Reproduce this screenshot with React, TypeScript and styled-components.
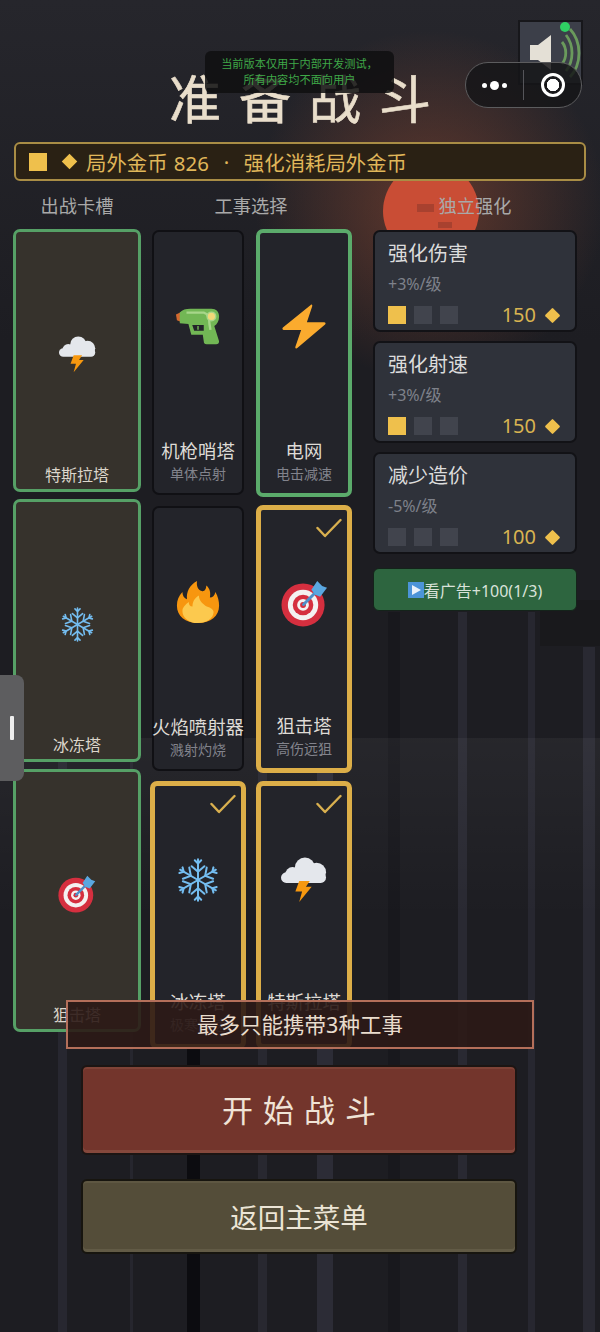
import styled, { createGlobalStyle } from 'styled-components'

const GlobalStyle = createGlobalStyle`
  html, body {
    margin: 0;
    padding: 0;
    background: #1d1d22;
  }
  * {
    box-sizing: border-box;
  }
`

// vertical bars of the blurred game scene behind the menu: x, width, colour, top
const bars: [number, number, string, number][] = [
  [58, 9, '#272730', 612],
  [130, 3, '#26262e', 612],
  [187, 13, '#0c0c10', 1040],
  [258, 9, '#282830', 612],
  [317, 16, '#2c2c36', 612],
  [388, 12, '#18181d', 612],
  [390, 10, '#0c0c10', 998],
  [458, 9, '#292932', 612],
  [528, 7, '#272730', 612],
  [583, 12, '#292932', 647],
]
const barLayers = bars.map(([, , c]) => `linear-gradient(${c}, ${c})`).join(', ')
const barPositions = bars.map(([x, , , y]) => `${x}px ${y}px`).join(', ')
const barSizes = bars.map(([, w, , y]) => `${w}px ${1332 - y}px`).join(', ')

/* ---------- icons ---------- */

const Target = ({ size }: { size: number }) => (
  <svg width={size} height={size} viewBox="0 0 48 48">
    <circle cx="22.500" cy="25.500" r="22" fill="#d52f3f" />
    <circle cx="22.500" cy="25.500" r="15.500" fill="#f4f1f1" />
    <circle cx="22.500" cy="25.500" r="10.500" fill="#d52f3f" />
    <circle cx="22.500" cy="25.500" r="6" fill="#f4f1f1" />
    <circle cx="22.500" cy="25.500" r="3" fill="#d52f3f" />
    <path d="M23 25 L37 11" stroke="#4f8fc9" strokeWidth="3" strokeLinecap="round" />
    <path d="M31 10 L37 1 L42 6 L47 8 L40 17 L35 15 Z" fill="#5aa7e0" />
  </svg>
)

const Snowflake = ({ size }: { size: number }) => (
  <svg width={size} height={size} viewBox="0 0 48 48" fill="none" stroke="#74bdf0" strokeWidth="2.200" strokeLinecap="round" strokeLinejoin="round">
    {[0, 60, 120, 180, 240, 300].map((a) => (
      <g key={a} transform={`rotate(${a} 24 24)`}>
        <path d="M24 24 V1.500" />
        <path d="M17 9 L24 15 L31 9" />
        <path d="M20.500 2.500 L24 6 L27.500 2.500" />
      </g>
    ))}
  </svg>
)

const StormCloud = ({ size }: { size: number }) => (
  <svg width={size} height={size} viewBox="0 0 48 48">
    <g fill="#e4e7ec">
      <circle cx="12" cy="18" r="7.500" />
      <circle cx="25" cy="11" r="10.500" />
      <circle cx="37" cy="16" r="10" />
      <rect x="0" y="16" width="47" height="11" rx="5.500" />
    </g>
    <path d="M19 25 L30 25 L26 31 L32 31 L19 47 L22 36 L15 36 Z" fill="#f7980f" />
  </svg>
)

const Bolt = ({ size }: { size: number }) => (
  <svg width={size} height={size} viewBox="0 0 48 48">
    <path
      d="M31 1 C32 0 33 1 32.500 2.500 L27 19 L45 19 C46.500 19 47 20.500 46 21.500 L17 46 C16 47 14.500 46 15 44.500 L21 27 L3 27 C1.500 27 1 25.500 2 24.500 Z"
      fill="#fbab2e"
    />
  </svg>
)

const Flame = ({ size }: { size: number }) => (
  <svg width={size} height={size} viewBox="0 0 48 48">
    <path
      d="M24 47 C10 47 1 39 1 28 C1 22 3 17 7 13 C7 17 9 20 12 21 C11 13 15 5 23 1 C22 6 24 11 28 12 C31 13 33 10 33 6 C37 9 38 14 37 19 C40 19 42 17 43 13 C46 18 47 23 47 28 C47 39 38 47 24 47 Z"
      fill="#f7960f"
    />
    <path
      d="M24 47 C14 47 7 41 7 34 C7 30 10 27 14 24 C14 27 15 29 18 29 C18 24 20 20 25 17 C25 22 28 25 32 28 C36 30 41 31 41 35 C41 42 33 47 24 47 Z"
      fill="#fcc94e"
    />
  </svg>
)

const WaterGun = ({ size }: { size: number }) => (
  <svg width={size} height={size} viewBox="0 0 48 48">
    <path d="M1 12 L7 9 L7 20 L2 18 Z" fill="#d4682f" />
    <path
      d="M5 10 C8 7 11 6 16 6 L38 6 C43 6 46 9 46 14 C46 19 44 22 41 24 L46 40 C46 42 45 43 43 43 L33 43 C31 43 30 42 30 40 L29 33 L17 33 L14 22 L5 21 Z"
      fill="#72b755"
    />
    <path d="M18 23 L30 23 L30 29 L20 29 Z" fill="#23242a" />
    <path d="M24 24 L24 28" stroke="#72b755" strokeWidth="1.500" />
    <path d="M12 10 L30 10 C34 11 36 15 36 22 L37 28" stroke="#a7d68a" strokeWidth="2.500" fill="none" />
    <circle cx="38" cy="14" r="4.500" fill="#f2d878" stroke="#a7d68a" strokeWidth="1.500" />
  </svg>
)

const Check = () => (
  <svg width="26" height="20" viewBox="0 0 26 20" fill="none" stroke="#d9b04f" strokeWidth="2.400" strokeLinecap="round" strokeLinejoin="round">
    <path d="M1.500 10 L9 18 L24.500 2" />
  </svg>
)

/* ---------- data ---------- */

const slots = [
  { name: '特斯拉塔', icon: <StormCloud size={37} /> },
  { name: '冰冻塔', icon: <Snowflake size={35} /> },
  { name: '狙击塔', icon: <Target size={38} /> },
]

type Mark = 'none' | 'equipped' | 'picked'

const towers: { name: string; desc: string; mark: Mark; icon: React.ReactNode }[] = [
  { name: '机枪哨塔', desc: '单体点射', mark: 'none', icon: <WaterGun size={46} /> },
  { name: '电网', desc: '电击减速', mark: 'equipped', icon: <Bolt size={46} /> },
  { name: '火焰喷射器', desc: '溅射灼烧', mark: 'none', icon: <Flame size={44} /> },
  { name: '狙击塔', desc: '高伤远狙', mark: 'picked', icon: <Target size={47} /> },
  { name: '冰冻塔', desc: '极寒减速', mark: 'picked', icon: <Snowflake size={44} /> },
  { name: '特斯拉塔', desc: '连锁闪电', mark: 'picked', icon: <StormCloud size={46} /> },
]

const upgrades = [
  { name: '强化伤害', rate: '+3%/级', level: 1, cost: 150 },
  { name: '强化射速', rate: '+3%/级', level: 1, cost: 150 },
  { name: '减少造价', rate: '-5%/级', level: 0, cost: 100 },
]

/* ---------- page ---------- */

export default function App() {
  return (
    <Page>
      <GlobalStyle />
      <Scene>
        <Sun />
        <Ember $x={417} $y={204} $w={17} $h={8} />
        <Ember $x={438} $y={222} $w={14} $h={6} />
      </Scene>

      <Content>
        <Title>准备战斗</Title>
        <CoinBar>
          <CoinSquare />
          <CoinDiamond />
          <span>局外金币 826</span>
          <CoinDot>·</CoinDot>
          <span>强化消耗局外金币</span>
        </CoinBar>

        <Columns>
          <Column>
            <Heading>出战卡槽</Heading>
            <SlotList>
              {slots.map((s) => (
                <SlotCard key={s.name}>
                  <SlotIcon>{s.icon}</SlotIcon>
                  <SlotName>{s.name}</SlotName>
                </SlotCard>
              ))}
            </SlotList>
          </Column>

          <Column>
            <Heading>工事选择</Heading>
            <TowerGrid>
              {towers.map((t) => (
                <TowerCard key={t.name} $mark={t.mark}>
                  {t.mark === 'picked' && (
                    <CheckMark>
                      <Check />
                    </CheckMark>
                  )}
                  <TowerIcon>{t.icon}</TowerIcon>
                  <TowerName>{t.name}</TowerName>
                  <TowerDesc>{t.desc}</TowerDesc>
                </TowerCard>
              ))}
            </TowerGrid>
          </Column>

          <UpgradeColumn>
            <Heading>独立强化</Heading>
            <UpgradeList>
              {upgrades.map((u) => (
                <UpgradeCard key={u.name}>
                  <UpgradeName>{u.name}</UpgradeName>
                  <UpgradeRate>{u.rate}</UpgradeRate>
                  <UpgradeFoot>
                    <Pips>
                      {[0, 1, 2].map((i) => (
                        <Pip key={i} $on={i < u.level} />
                      ))}
                    </Pips>
                    <Cost>
                      {u.cost}
                      <CostDiamond />
                    </Cost>
                  </UpgradeFoot>
                </UpgradeCard>
              ))}
              <AdButton>
                <PlayBadge />
                看广告+100(1/3)
              </AdButton>
            </UpgradeList>
          </UpgradeColumn>
        </Columns>

        <Actions>
          <StartButton>开始战斗</StartButton>
          <BackButton>返回主菜单</BackButton>
        </Actions>
      </Content>

      <Notice>
        当前版本仅用于内部开发测试，
        <br />
        所有内容均不面向用户
      </Notice>

      <SoundButton>
        <svg width="61" height="61" viewBox="0 0 61 61" fill="none">
          <path d="M10 23 L18 23 L31 13 L31 48 L18 38 L10 38 Z" fill="#e4e0d6" />
          <path d="M42 20 C47 26 47 36 42 42" stroke="#6a9a5c" strokeWidth="2.800" />
          <path d="M46 13 C54 23 54 39 46 49" stroke="#6a9a5c" strokeWidth="2.800" />
          <path d="M50 7 C62 20 62 42 50 55" stroke="#6a9a5c" strokeWidth="2.800" />
        </svg>
        <SoundDot />
      </SoundButton>

      <Capsule>
        <MenuDots>
          <i />
          <b />
          <i />
        </MenuDots>
        <CapsuleLine />
        <CloseRing />
      </Capsule>

      <SideHandle>
        <HandleBar />
      </SideHandle>

      <Toast>最多只能携带3种工事</Toast>
    </Page>
  )
}

const Page = styled.div`
  position: relative;
  width: 600px;
  height: 1332px;
  overflow: hidden;
  background: linear-gradient(#26262c, #1d1d22 340px);
  font-family: 'Noto Sans', 'Noto Sans CJK SC', sans-serif;
`

const Scene = styled.div`
  position: absolute;
  inset: 0;
  background-image:
    radial-gradient(circle 175px at 430px 205px, rgba(150, 75, 50, 0.55), rgba(150, 75, 50, 0)),
    linear-gradient(rgba(255, 255, 255, 0.045), rgba(255, 255, 255, 0)),
    linear-gradient(#19191c, #19191c),
    ${barLayers};
  background-position:
    0 0,
    0 738px,
    540px 600px,
    ${barPositions};
  background-size:
    100% 100%,
    100% 180px,
    60px 46px,
    ${barSizes};
  background-repeat: no-repeat;
`

const Sun = styled.div`
  position: absolute;
  left: 383px;
  top: 163px;
  width: 96px;
  height: 96px;
  border-radius: 50%;
  background: #c94d35;
`

const Ember = styled.div<{ $x: number; $y: number; $w: number; $h: number }>`
  position: absolute;
  left: ${(p) => p.$x}px;
  top: ${(p) => p.$y}px;
  width: ${(p) => p.$w}px;
  height: ${(p) => p.$h}px;
  background: #a8412f;
`

const Content = styled.div`
  position: relative;
  display: flex;
  flex-direction: column;
  padding-top: 68px;
`

const Title = styled.h1`
  margin: 0 0 0 18px;
  height: 74px;
  font-size: 52px;
  line-height: 62px;
  font-weight: 400;
  letter-spacing: 18px;
  text-align: center;
  color: #e9decb;
  -webkit-text-stroke: 0.6px #e9decb;
`

const CoinBar = styled.div`
  display: flex;
  align-items: center;
  height: 39px;
  margin: 0 14px;
  padding-left: 13px;
  background: #2a2114;
  border: 2px solid #a98d45;
  border-radius: 6px;
  font-size: 20.400px;
  color: #e0b75a;
  white-space: nowrap;
  word-spacing: 1px;
`

const CoinSquare = styled.div`
  width: 18px;
  height: 18px;
  margin-right: 17px;
  background: #efc04c;
`

const CoinDiamond = styled.div`
  width: 11px;
  height: 11px;
  margin-right: 11px;
  background: #efc04c;
  transform: rotate(45deg);
`

const CoinDot = styled.span`
  width: 35px;
  text-align: center;
`

const Columns = styled.div`
  display: grid;
  grid-template-columns: 128px 198px 216px;
  column-gap: 11px;
  margin-left: 13px;
`

const Column = styled.section`
  display: flex;
  flex-direction: column;
`

const UpgradeColumn = styled(Column)`
  padding-left: 12px;
`

const Heading = styled.h2`
  margin: 0;
  height: 48px;
  padding-top: 12px;
  font-size: 18.200px;
  line-height: 26px;
  font-weight: 400;
  text-align: center;
  color: #a9a9a9;
`

const SlotList = styled.div`
  display: grid;
  grid-template-rows: repeat(3, 263px);
  row-gap: 7px;
`

const SlotCard = styled.div`
  display: flex;
  flex-direction: column;
  align-items: center;
  background: #36322c;
  border: 3px solid #56a066;
  border-radius: 7px;
`

const SlotIcon = styled.div`
  display: flex;
  align-items: center;
  justify-content: center;
  flex: 0 0 244px;
`

const SlotName = styled.div`
  margin-top: -12px;
  font-size: 16px;
  line-height: 22px;
  color: #dcd6cb;
`

const TowerGrid = styled.div`
  display: grid;
  grid-template-columns: repeat(2, 92px);
  grid-auto-rows: 265px;
  column-gap: 14px;
  row-gap: 11px;
  padding-top: 1px;
`

const TowerCard = styled.div<{ $mark: Mark }>`
  position: relative;
  display: flex;
  flex-direction: column;
  align-items: center;
  padding-bottom: 8px;
  background: #23242a;
  border-radius: 7px;
  border: ${(p) =>
    p.$mark === 'picked' ? '5px solid #dcae48' : p.$mark === 'equipped' ? '4px solid #5bab6b' : '2px solid #101014'};
  margin: ${(p) => (p.$mark === 'none' ? '0' : '-1.5px -2px')};
`

const TowerIcon = styled.div`
  display: flex;
  align-items: center;
  justify-content: center;
  flex: 0 0 188px;
  width: 100%;
`

const CheckMark = styled.div`
  position: absolute;
  top: 8px;
  right: 5px;
  line-height: 0;
`

const TowerName = styled.div`
  margin-top: auto;
  font-size: 18.400px;
  line-height: 24px;
  color: #dedbd6;
  white-space: nowrap;
`

const TowerDesc = styled.div`
  font-size: 14px;
  line-height: 22px;
  color: #82838c;
  white-space: nowrap;
`

const UpgradeList = styled.div`
  display: flex;
  flex-direction: column;
  gap: 9px;
  padding-top: 1px;
`

const UpgradeCard = styled.div`
  display: flex;
  flex-direction: column;
  height: 102px;
  padding: 7px 17px 0 13px;
  background: #2f323a;
  border: 2px solid #121216;
  border-radius: 7px;
`

const UpgradeName = styled.div`
  font-size: 20px;
  line-height: 30px;
  color: #dcdcdc;
`

const UpgradeRate = styled.div`
  margin-top: 5px;
  font-size: 16px;
  line-height: 20px;
  color: #7e818a;
`

const UpgradeFoot = styled.div`
  display: flex;
  align-items: center;
  justify-content: space-between;
  margin-top: 9px;
`

const Pips = styled.div`
  display: flex;
  gap: 8px;
`

const Pip = styled.div<{ $on: boolean }>`
  width: 18px;
  height: 18px;
  background: ${(p) => (p.$on ? '#efc04c' : '#41444d')};
`

const Cost = styled.div`
  display: flex;
  align-items: center;
  gap: 11px;
  font-size: 20px;
  line-height: 24px;
  color: #d9b451;
`

const CostDiamond = styled.div`
  width: 11px;
  height: 11px;
  border-radius: 1px;
  background: #efc04c;
  transform: rotate(45deg);
`

const AdButton = styled.div`
  display: flex;
  align-items: center;
  justify-content: center;
  height: 43px;
  margin-top: 5px;
  background: #2d653f;
  border: 1px solid #14231a;
  border-radius: 6px;
  font-size: 16px;
  color: #d9e2da;
`

const PlayBadge = styled.div`
  position: relative;
  width: 16px;
  height: 16px;
  background: #4c94d8;
  &::after {
    content: '';
    position: absolute;
    left: 4px;
    top: 3px;
    border-left: 9px solid #eaf2fa;
    border-top: 5px solid transparent;
    border-bottom: 5px solid transparent;
  }
`

const Actions = styled.div`
  display: flex;
  flex-direction: column;
  gap: 24px;
  width: 436px;
  margin: 18px 0 0 81px;
`

const StartButton = styled.div`
  display: flex;
  align-items: center;
  justify-content: center;
  height: 90px;
  padding: 0 0 4px 10px;
  background: #73352c;
  border: 2px solid #1c1513;
  box-shadow: inset 0 -3px 0 #85483c, inset 0 2px 0 #7f4337;
  border-radius: 6px;
  font-size: 31px;
  letter-spacing: 10px;
  color: #f0e3d6;
`

const BackButton = styled.div`
  display: flex;
  align-items: center;
  justify-content: center;
  height: 75px;
  padding-bottom: 2px;
  background: #544d39;
  border: 2px solid #17150f;
  box-shadow: inset 0 -3px 0 #625b46, inset 0 2px 0 #5e5742;
  border-radius: 6px;
  font-size: 27.500px;
  color: #ece5d6;
`

const Notice = styled.div`
  position: absolute;
  left: 205px;
  top: 51px;
  width: 189px;
  height: 42px;
  padding-top: 5px;
  background: rgba(15, 15, 16, 0.86);
  border-radius: 6px;
  font-size: 11.200px;
  line-height: 16px;
  text-align: center;
  color: #3fa848;
`

const SoundButton = styled.div`
  position: absolute;
  left: 518px;
  top: 20px;
  width: 65px;
  height: 65px;
  overflow: hidden;
  background: #3c3f49;
  border: 2px solid #17171b;
  line-height: 0;
`

const SoundDot = styled.div`
  position: absolute;
  top: 0;
  right: 11px;
  width: 10px;
  height: 10px;
  border-radius: 50%;
  background: #2fcf63;
`

const Capsule = styled.div`
  position: absolute;
  left: 465px;
  top: 62px;
  display: flex;
  align-items: center;
  width: 117px;
  height: 46px;
  background: rgba(22, 22, 24, 0.84);
  border: 1px solid #5c5c5e;
  border-radius: 23px;
`

const MenuDots = styled.div`
  display: flex;
  align-items: center;
  justify-content: center;
  gap: 3px;
  width: 57px;
  & > i {
    width: 5px;
    height: 5px;
    border-radius: 50%;
    background: #fff;
  }
  & > b {
    width: 9px;
    height: 9px;
    border-radius: 50%;
    background: #fff;
  }
`

const CapsuleLine = styled.div`
  width: 1px;
  height: 30px;
  background: #55555a;
`

const CloseRing = styled.div`
  width: 24px;
  height: 24px;
  margin-left: 17px;
  border-radius: 50%;
  border: 3px solid #fff;
  background: radial-gradient(circle, #fff 0 6px, transparent 6.500px);
`

const SideHandle = styled.div`
  position: absolute;
  left: 0;
  top: 675px;
  display: flex;
  align-items: center;
  width: 24px;
  height: 106px;
  padding-left: 10px;
  background: #5d5d5f;
  border-radius: 0 8px 8px 0;
`

const HandleBar = styled.div`
  width: 4px;
  height: 24px;
  border-radius: 1px;
  background: #eeeeee;
`

const Toast = styled.div`
  position: absolute;
  left: 66px;
  top: 1000px;
  display: flex;
  align-items: center;
  justify-content: center;
  width: 468px;
  height: 49px;
  padding-bottom: 3px;
  background: rgba(44, 25, 22, 0.9);
  border: 2px solid #b46f5a;
  font-size: 21.500px;
  color: #e9dccd;
`
